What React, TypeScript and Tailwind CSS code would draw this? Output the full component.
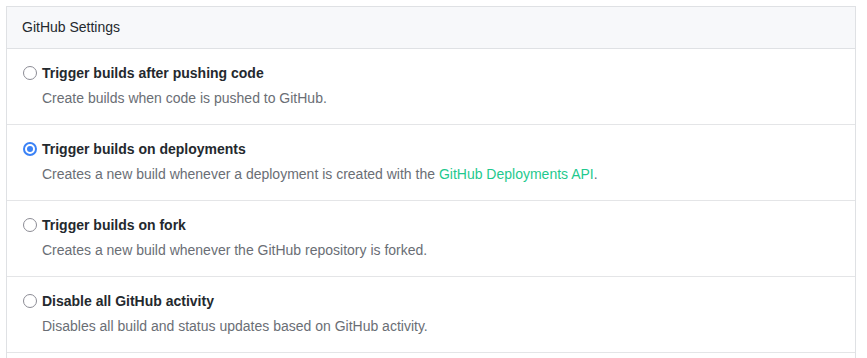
const options = [
  {
    title: 'Trigger builds after pushing code',
    desc: <>Create builds when code is pushed to GitHub.</>,
    checked: false,
  },
  {
    title: 'Trigger builds on deployments',
    desc: (
      <>
        Creates a new build whenever a deployment is created with the{' '}
        <a href="#" className="text-[#1fc98e]">GitHub Deployments API</a>.
      </>
    ),
    checked: true,
  },
  {
    title: 'Trigger builds on fork',
    desc: <>Creates a new build whenever the GitHub repository is forked.</>,
    checked: false,
  },
  {
    title: 'Disable all GitHub activity',
    desc: <>Disables all build and status updates based on GitHub activity.</>,
    checked: false,
  },
];

function Radio({ checked }: { checked: boolean }) {
  return checked ? (
    <span className="w-[14px] h-[14px] rounded-full border-2 border-[#3b82f6] flex items-center justify-center shrink-0">
      <span className="w-[6px] h-[6px] rounded-full bg-[#3b82f6]" />
    </span>
  ) : (
    <span className="w-[14px] h-[14px] rounded-full border-[1.5px] border-[#8c8c95] shrink-0" />
  );
}

export default function App() {
  return (
    <div className="bg-white h-[358px] pl-[6px] pt-[6px] overflow-hidden" style={{ fontFamily: '"Liberation Sans", Arial, sans-serif' }}>
      <div className="w-[850px] min-h-[400px] border border-[#dfe1e4] text-[14px]">
        <div className="bg-[#f7f8fa] border-b border-[#dfe1e4] h-[42px] px-[15px] flex items-center text-[#24292e]">
          GitHub Settings
        </div>
        {options.map((o) => (
          <div key={o.title} className="border-b border-[#e4e5e7] pl-[16px] pt-[14px] pb-[16px]">
            <label className="flex items-center gap-[5px] h-[20px]">
              <Radio checked={o.checked} />
              <span className="font-bold text-[#24292e]">{o.title}</span>
            </label>
            <p className="mt-[5px] pl-[19px] leading-[20px] text-[#6a6e75]">{o.desc}</p>
          </div>
        ))}
      </div>
    </div>
  );
}
